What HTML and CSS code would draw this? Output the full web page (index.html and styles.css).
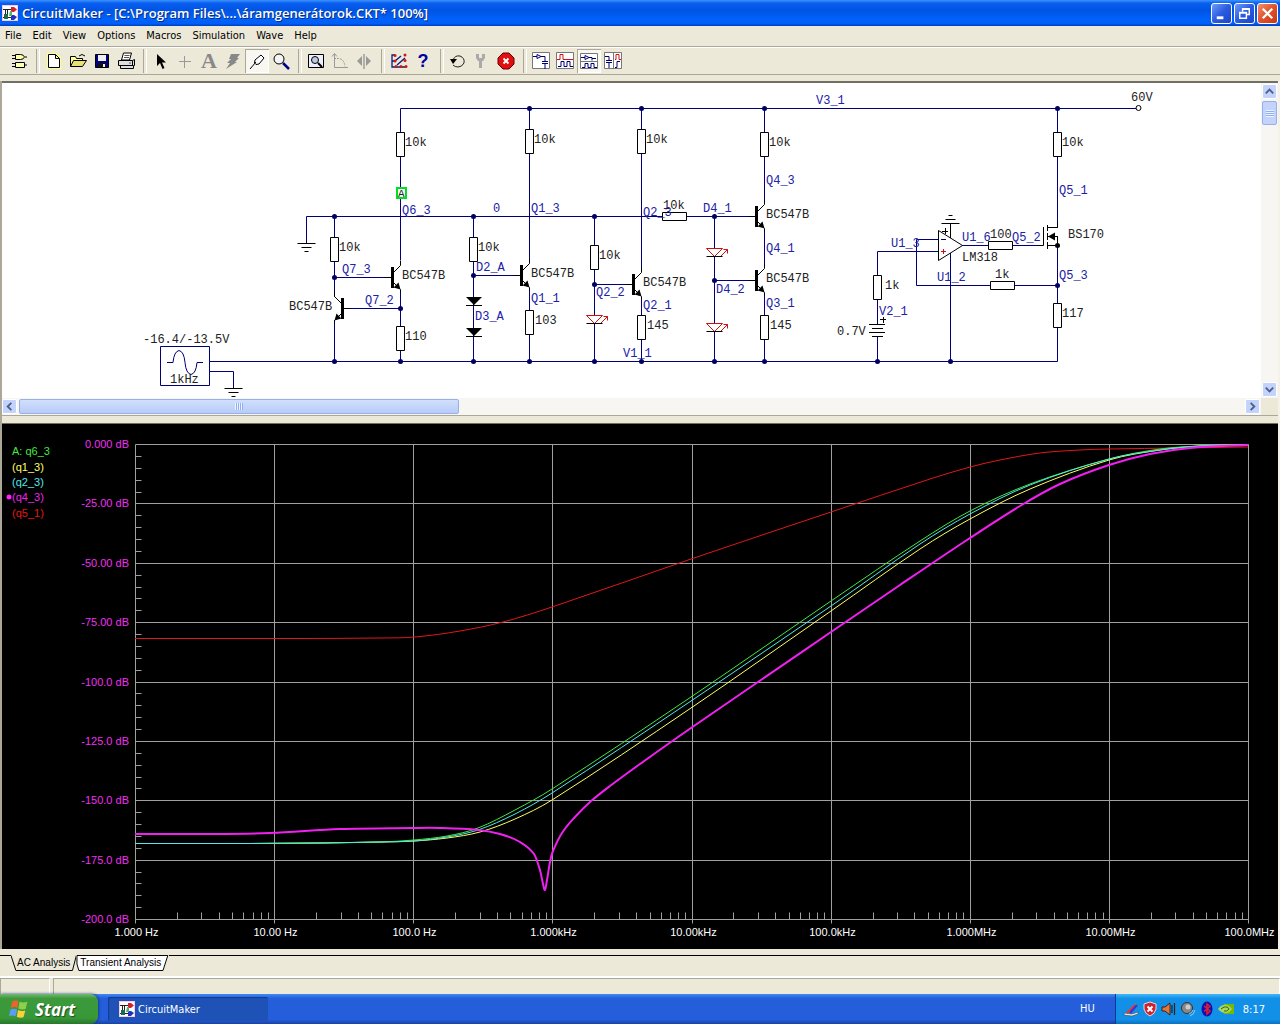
FILE: index.html
```
<!DOCTYPE html>
<html lang="hu">
<head>
	<meta charset="UTF-8">
	<title>CircuitMaker</title>
	<link rel="stylesheet" href="styles.css">
</head>
<body>

<!-- shared symbols -->
<svg class="defs" aria-hidden="true">
	<symbol id="app" viewBox="0 0 16 16">
		<rect width="16" height="16" fill="#fbc8ea"/>
		<rect x="1" y="1" width="14" height="14" fill="#fff"/>
		<path d="M1 4.500h9M5.500 4v9M3.500 4v9M1 12.500h9" stroke="#222" fill="none"/>
		<path d="M9 2h3l3 2.500-3 2.500H9z" fill="#d8202c"/>
		<path d="M9 10h3l3 2-3 3H9z" fill="#2030c0"/>
		<path d="M2 9h4v5H2z" fill="#176b50"/>
		<path d="M8 6h2v5H7z" fill="#58b070"/>
	</symbol>
	<symbol id="res" viewBox="-5 -13 10 26" overflow="visible"><path class="part" d="M-4-12h8v24h-8z"/></symbol>
	<symbol id="resh" viewBox="-13 -5 26 10" overflow="visible"><path class="part" d="M-12-4h24v8h-24z"/></symbol>
</svg>

<header class="title_bar">
	<svg class="ico16"><use href="#app"/></svg>
	<h1>CircuitMaker - [C:\Program Files\...\áramgenerátorok.CKT* 100%]</h1>
	<button class="win_btn" aria-label="Minimize"><svg viewBox="0 0 20 20"><path d="M5 13h7v3H5z" fill="#fff"/></svg></button>
	<button class="win_btn" aria-label="Restore"><svg viewBox="0 0 20 20"><path d="M8 8V5h7v6h-3M5 9h7v6H5zM5 9.500h7M8 5.500h7" fill="none" stroke="#fff" stroke-width="1.500"/></svg></button>
	<button class="win_btn win_close" aria-label="Close"><svg viewBox="0 0 20 20"><path d="M5 5l10 10M15 5L5 15" stroke="#fff" stroke-width="2.400"/></svg></button>
</header>

<nav class="menu">
	<button>File</button>
	<button>Edit</button>
	<button>View</button>
	<button>Options</button>
	<button>Macros</button>
	<button>Simulation</button>
	<button>Wave</button>
	<button>Help</button>
</nav>

<div class="toolbar">
	<div class="grp">
		<button aria-label="Parts"><svg viewBox="0 0 20 20"><path d="M6.500 3.500h5q3 0 4 2.500-1 2.500-4 2.500h-5zM6.500 11.500h9v5h-9zM3 4.500h3M3 7.500h3M16 6h2M3 12.500h3M3 15.500h3M16 14h2" fill="#ffffb0" stroke="#000"/></svg></button>
	</div>
	<div class="grp">
		<button aria-label="New"><svg viewBox="0 0 20 20"><path d="M4.500 3.500h7l4 4v9h-11zM11.500 3.500v4h4" fill="#fff" stroke="#ffff90" stroke-width="3"/><path d="M4.500 3.500h7l4 4v9h-11zM11.500 3.500v4h4" fill="#fff" stroke="#000"/></svg></button>
		<button aria-label="Open"><svg viewBox="0 0 20 20"><path d="M2.500 15.500v-10h5l1 2h6v3" fill="#ffffa0" stroke="#000"/><path d="M2.500 15.500l3-6h13l-4 6z" fill="#e8e070" stroke="#000"/><path d="M11 5q3-3 6 0" fill="none" stroke="#000"/></svg></button>
		<button aria-label="Save"><svg viewBox="0 0 20 20"><path d="M3.500 3.500h13v13h-13z" fill="#000080" stroke="#000"/><path d="M6 4h8v6H6z" fill="#eee"/><path d="M6 12h8v4H6z" fill="#111"/><path d="M11 13h2v3h-2z" fill="#eee"/></svg></button>
		<button aria-label="Print"><svg viewBox="0 0 20 20"><path d="M5.500 9l2-7h8l-2 7z" fill="#fff" stroke="#000"/><path d="M2.500 9.500h14v5h-14zM4.500 14.500h13v3h-13zM16.500 9.500l2-1v6l-1 1" fill="#ddd" stroke="#000"/><path d="M8.500 4.500h5M8 6.500h5M13 12h2" stroke="#555"/></svg></button>
	</div>
	<div class="grp">
		<button aria-label="Arrow"><svg viewBox="0 0 20 20"><path d="M6 3v12l3-3 2.500 6 2-1-2.500-5.500h4z"/></svg></button>
		<button aria-label="Wire"><svg viewBox="0 0 20 20"><path d="M9.500 5v12M4 10.500h12" stroke="#999"/></svg></button>
		<button class="letter" aria-label="Text">A</button>
		<button aria-label="Delete"><svg viewBox="0 0 20 20"><path d="M8 3h9l-3 4h2l-4 4h2L3 18l4-6H4l4-4H6z" fill="#888"/></svg></button>
		<button class="on" aria-label="Probe"><svg viewBox="0 0 20 20"><path d="M3 18l6-7M8 9l6-5 3 3-5 6-3 .500-1.500-1.500z" fill="#fff" stroke="#000"/></svg></button>
		<button aria-label="Zoom"><svg viewBox="0 0 20 20"><path d="M12 12l6 6" stroke="#000090" stroke-width="2.500"/><circle cx="8" cy="8" r="5" fill="#f4f4f4" stroke="#000"/></svg></button>
	</div>
	<div class="grp">
		<button aria-label="Fit"><svg viewBox="0 0 20 20"><path d="M2.500 3.500h15v13h-15z" fill="#eef" stroke="#000"/><path d="M12 12l4 4" stroke="#000" stroke-width="2"/><circle cx="9" cy="9" r="3.500" fill="#bcd" stroke="#000"/></svg></button>
		<button aria-label="Rotate"><svg viewBox="0 0 20 20"><path d="M4.500 3v13.500H18M2 5.500l2.500-3 2.500 3" fill="none" stroke="#999"/><path d="M4 7.500h4q6 0 7 8" fill="none" stroke="#999" stroke-dasharray="2 1"/></svg></button>
		<button aria-label="Mirror"><svg viewBox="0 0 20 20"><path d="M8 5v10l-5-5zM12 5v10l5-5z" fill="#999"/><path d="M10 3v15" stroke="#777"/></svg></button>
	</div>
	<div class="grp">
		<button aria-label="Digital mode"><svg viewBox="0 0 20 20"><path d="M6 4H3v12h14M3 10h3l6-5M8 14l8-7" fill="none" stroke="#002080" stroke-width="1.300"/><g fill="#d01818"><circle cx="6" cy="4.500" r="1.500"/><circle cx="6" cy="10" r="1.500"/><circle cx="7" cy="15.500" r="1.500"/><circle cx="12" cy="15.500" r="1.500"/><circle cx="16" cy="4" r="1.500"/><circle cx="16" cy="9.500" r="1.500"/><circle cx="17" cy="15.500" r="1.500"/></g></svg></button>
		<button class="help" aria-label="Help">?</button>
	</div>
	<div class="grp">
		<button aria-label="Reset"><svg viewBox="0 0 20 20"><path d="M5 9q2-5 7-4 5 2 4 7-2 4-6 4-3 0-5-2" fill="none" stroke="#222"/><path d="M2 8h7l-4 5z"/></svg></button>
		<button aria-label="Setup"><svg viewBox="0 0 20 20"><path d="M4 3v4l2 3h1v7h3v-7h1l2-3V3h-3v4H7V3z" fill="#aaa"/></svg></button>
		<button aria-label="Stop"><svg viewBox="0 0 20 20"><path d="M7 2h6l5 5v6l-5 5H7l-5-5V7z" fill="#e01010" stroke="#600" stroke-linejoin="round"/><path d="M7.500 7.500l5 5M12.500 7.500l-5 5" stroke="#fff" stroke-width="1.800"/></svg></button>
	</div>
	<div class="grp">
		<button aria-label="Schematic view"><svg viewBox="0 0 20 20"><path class="pane" d="M1.500 1.500h17v16h-17z"/><path class="nv" d="M2 5.500h4v-2l4 2-4 2v-2M10 5.500h4v5M11 10.500h6M11 12.500h6M14 13v5"/></svg></button>
		<button aria-label="Wave view"><svg viewBox="0 0 20 20"><path class="pane" d="M1.500 1.500h17v16h-17z"/><path class="rd" d="M2 8.500h3v-5h3v5h10"/><path class="nv" d="M3 15.500h3v-5h3v5h3v-5h3v5h3"/></svg></button>
		<button class="on" aria-label="Split horizontal"><svg viewBox="0 0 20 20"><path class="pane" d="M1.500 2.500h17v15h-17zM2 10.500h16"/><path class="nv" d="M2 6.500h4v-2l4 2-4 2v-2M10 6.500h3v3M13 7.500h4M3 16.500h3v-4h3v4h3v-4h3v4h3"/></svg></button>
		<button aria-label="Split vertical"><svg viewBox="0 0 20 20"><path class="pane" d="M1.500 1.500h17v16h-17zM10.500 2v15"/><path class="nv" d="M2 5.500h4v4M3 9.500h6M3 11.500h6M6 12v5M12 16.500h2v-6h3"/><path class="rd" d="M12 8.500h1v-5h3v5h2"/></svg></button>
	</div>
</div>

<main>
	<section class="sheet">
		<div class="sheet_view">
			<svg id="schematic" viewBox="2 83 1259 315" preserveAspectRatio="xMinYMin meet" role="img" aria-label="Circuit schematic"></svg>
		</div>
		<div class="vscroll">
			<button aria-label="Scroll up"><svg viewBox="0 0 14 14"><path d="M3 9l4-4 4 4"/></svg></button>
			<div class="thumb"></div>
			<button class="last" aria-label="Scroll down"><svg viewBox="0 0 14 14"><path d="M3 5l4 4 4-4"/></svg></button>
		</div>
		<div class="hscroll">
			<button aria-label="Scroll left"><svg viewBox="0 0 14 14"><path d="M9 3L5 7l4 4"/></svg></button>
			<div class="thumb"></div>
			<button class="last" aria-label="Scroll right"><svg viewBox="0 0 14 14"><path d="M5 3l4 4-4 4"/></svg></button>
		</div>
	</section>

	<section class="plot">
		<svg id="plot" viewBox="2 424 1276 525" preserveAspectRatio="xMidYMid meet" role="img" aria-label="AC analysis"></svg>
	</section>
</main>

<div class="tabs">
	<button class="tab"><svg viewBox="0 0 67 16" preserveAspectRatio="none"><path d="M0 .500L5 15.500H63L67 .500" fill="#ece9d8" stroke="#000"/></svg><span>AC Analysis</span></button>
	<button class="tab tab_on"><svg viewBox="0 0 96 16" preserveAspectRatio="none"><path d="M1 .500H95L90 15.500H3L1 9z" fill="#fff" stroke="#000"/></svg><span>Transient Analysis</span></button>
	<i class="tab_line"></i>
</div>

<div class="status"><span></span><span></span></div>

<footer class="taskbar">
	<button class="start">
		<svg viewBox="0 0 18 18"><path d="M3 2q3-1.500 5.500 0L7.500 8Q5 6.500 1.500 8z" fill="#f0622c"/><path d="M9.500 2.500q3 1.500 7 0L15 9q-3 1-6.500-.500z" fill="#8fd04a"/><path d="M1.300 9.500q3-1.500 6 0L6 15.500q-3-1.500-6 0z" fill="#5d9cf5"/><path d="M8.200 10q3 1.500 6.500.300L13 16.500q-3 1-6-.500z" fill="#fbd03a"/></svg>
		Start
	</button>
	<button class="task"><svg class="ico16"><use href="#app"/></svg>CircuitMaker</button>
	<span class="lang">HU</span>
	<div class="tray">
		<svg viewBox="0 0 16 16"><path d="M1 12l8 1 6-2v2l-6 2-8-1z" fill="#eee" stroke="#333" stroke-width=".5"/><path d="M3 12L13 2l2 2-7 8z" fill="#3a6"/><path d="M4 12l8-8" stroke="#e33" stroke-width="2"/><path d="M7 12l7-8" stroke="#33d" stroke-width="2"/></svg>
		<svg viewBox="0 0 16 16"><path d="M8 1l6 2v5q-1 5-6 7-5-2-6-7V3z" fill="#d3202c" stroke="#ddd"/><path d="M5.500 5.500l5 5M10.500 5.500l-5 5" stroke="#fff" stroke-width="2"/></svg>
		<svg viewBox="0 0 16 16"><path d="M1 6h3l5-4v12l-5-4H1z" fill="#e07840" stroke="#402010"/><path d="M11 4v8M13.500 2v12" stroke="#222" stroke-width="1.200"/></svg>
		<svg viewBox="0 0 16 16"><circle cx="7" cy="7" r="5.500" fill="#888" stroke="#333"/><circle cx="8" cy="6" r="2.500" fill="#ccc"/><path d="M10 15q4-1 5-6M9 13q3-1 4-4" fill="none" stroke="#8cc8f4"/></svg>
		<svg viewBox="0 0 16 16"><ellipse cx="8" cy="8" rx="5.500" ry="7.500" fill="#1010b0"/><path d="M5 5l6 5-3 3V3l3 2.500-6 5" fill="none" stroke="#e02030" stroke-width="1.500"/></svg>
		<svg viewBox="0 0 16 16"><path d="M6 3h10v10H6z" fill="#76b900"/><path d="M0 8q4-5 9-4 3 1 5 4-3 4-6 4-5 0-8-4z" fill="#a8d860"/><path d="M3 8q3-3 6-2 2 1 2 2-2 3-5 2" fill="none" stroke="#386010"/></svg>
		<time>8:17</time>
	</div>
</footer>

<script src="script.js"></script>
</body>
</html>
```
FILE: styles.css
```
*{box-sizing: border-box; margin: 0; padding: 0;}
body{ display: flex; flex-direction: column; height: 100vh; overflow: hidden; background: #ece9d8; font: 11px "DejaVu Sans Condensed", "Open Sans", sans-serif; color: #000; }
button{ border: 0; background: none; font: inherit; color: inherit; }
.defs{ position: absolute; width: 0; height: 0; }
.ico16{ flex: none; width: 16px; height: 16px; }

/*title bar*/
.title_bar{ flex: none; display: flex; align-items: center; gap: 2px; height: 26px; padding: 0 2px; background: linear-gradient(#3d95ff 0, #0a5ff0 12%, #0054e3 40%, #0062fb 75%, #0060f8 90%, #003dc0 100%); }
.title_bar h1{ flex: 1; padding-left: 2px; font: 600 13px "Open Sans", sans-serif; color: #fff; text-shadow: 1px 1px 0 #0a2a80; white-space: nowrap; }
.win_btn{ width: 21px; height: 21px; border: 1px solid #fff; border-radius: 3px; background: linear-gradient(135deg, #6f9cf8, #2a5be0 50%, #1d46c8); }
.win_btn svg{ display: block; width: 19px; height: 19px; }
.win_close{ background: linear-gradient(135deg, #f0906c, #e0522c 50%, #c8360e); }

/*menu*/
.menu{ flex: none; display: flex; align-items: center; gap: 1px; height: 21px; border-bottom: 1px solid #aca899; }
.menu button{ padding: 0 5px; line-height: 18px; }

/*toolbar*/
.toolbar{ flex: none; display: flex; align-items: center; height: 28px; padding-left: 7px; border-top: 1px solid #fff; border-bottom: 1px solid #aca899; }
.grp{ display: flex; }
.grp + .grp{ position: relative; margin-left: 11px; }
.grp + .grp::before{ content: ""; position: absolute; left: -6px; top: 0; width: 2px; height: 24px; border-left: 1px solid #aca899; border-right: 1px solid #fff; }
.grp button{ width: 24px; height: 24px; padding: 2px; border: 0; text-align: center; }
.grp svg{ display: block; width: 20px; height: 20px; }
.grp .on{ background: #f8f7f2; box-shadow: inset 1px 1px 0 #aca899, inset -1px -1px 0 #fff; }
.grp .letter{ padding: 0; font: bold 22px/24px "Liberation Serif", serif; color: #888; }
.grp .help{ padding: 0; font: bold 18px/24px "Liberation Sans", sans-serif; color: #0000a0; }
.pane{ fill: #fff; stroke: #777; }
.nv{ fill: none; stroke: #000070; }
.rd{ fill: none; stroke: #d01010; }

main{ flex: 1; min-height: 0; display: flex; flex-direction: column; margin-top: 6px; border-left: 2px solid #aca899; border-right: 2px solid #f4f2e8; }

/*schematic*/
.sheet{ flex: none; display: grid; grid-template-columns: 1fr 17px; grid-template-rows: auto 17px; border-top: 2px solid #716f64; border-bottom: 1px solid #aca899; }
.sheet_view{ background: #fff; }
.sheet svg{ display: block; }
#schematic{ width: 100%; height: auto; }
.vscroll, .hscroll{ display: flex; gap: 2px; padding: 1px; background: #f7f6f2; }
.vscroll{ flex-direction: column; }
.hscroll{ padding-left: 0; }
.vscroll button, .hscroll button{ flex: none; width: 15px; height: 15px; border: 1px solid #fff; border-radius: 2px; background: #c3d3fb; }
.vscroll svg, .hscroll svg{ width: 13px; height: 13px; fill: none; stroke: #4d6185; stroke-width: 2px; }
.thumb{ display: flex; border: 1px solid #98b0e8; border-radius: 2px; background: linear-gradient(#d0dffc, #b9cbf8); }
.thumb::after{ content: ""; width: 8px; height: 7px; margin: auto; background: repeating-linear-gradient(90deg, #eef4fe 0 1px, #8cb0f8 1px 2px); }
.vscroll .thumb{ height: 24px; background: #c3d3fb; }
.vscroll .thumb::after{ background: repeating-linear-gradient(#eef4fe 0 1px, #8cb0f8 1px 2px); }
.hscroll .thumb{ width: 35%; }
.last{ margin-top: auto; }
.hscroll .last{ margin: 0 0 0 auto; }

.wire{ fill: none; stroke: #000078; }
.part{ fill: #fff; stroke: #000; }
.ink{ fill: none; stroke: #000; }
.solid{ fill: #000; }
.led{ fill: #fff; stroke: #c81010; }
.node{ fill: #000060; }
.probe{ fill: #fff; stroke: #00e020; stroke-width: 2px; }
.val, .net{ font: 12px "Liberation Mono", monospace; fill: #222; white-space: pre; }
.net{ fill: #2020a8; }
.probe_txt{ font-size: 11px; }

/*plot*/
.plot{ flex: 1; min-height: 0; margin-top: 7px; border-top: 1px solid #716f64; background: #000; }
.plot svg{ display: block; width: 100%; height: 100%; }
.grid{ fill: none; stroke: #a0a0a0; }
.x_lbl, .y_lbl, .leg{ font: 11px "Liberation Sans", sans-serif; }
.x_lbl{ fill: #fff; text-anchor: middle; }
.y_lbl{ fill: #f030f0; text-anchor: end; }
.curve{ fill: none; }

/*bottom tabs*/
.tabs{ flex: none; display: flex; height: 21px; margin-top: 6px; }
.tabs::before{ content: ""; width: 11px; border-top: 1px solid #000; }
.tab{ position: relative; height: 16px; padding: 0 6px; font: 10px/14px "Liberation Sans", sans-serif; }
.tab svg{ position: absolute; left: 0; top: 0; width: 100%; height: 100%; }
.tab span{ position: relative; }
.tab_on{ padding: 0 8px 0 4px; }
.tab_line{ flex: 1; border-top: 1px solid #000; }

.status{ flex: none; display: flex; gap: 3px; height: 18px; border-top: 2px solid #fff; }
.status span{ flex: 1; border: 1px solid #aca899; border-bottom: 0; border-right-color: #fff; }
.status span:first-child{ flex: 0 0 50px; }

/*taskbar*/
.taskbar{ flex: none; display: flex; align-items: stretch; height: 30px; background: linear-gradient(#3f8cf3 0, #245edb 14%, #245edb 85%, #1941a5 100%); color: #fff; }
.start{ display: flex; align-items: center; gap: 6px; width: 98px; padding: 0 9px; border-radius: 0 8px 8px 0; background: linear-gradient(#72b870 0, #3c9a3c 15%, #389838 80%, #27762b 100%); font: italic bold 17px "Open Sans", sans-serif; color: #fff; text-shadow: 1px 1px 1px #205020; box-shadow: 1px 0 3px #1a3a90; }
.start svg{ width: 20px; height: 20px; }
.task{ display: flex; align-items: center; gap: 3px; width: 160px; margin: 3px 0 3px 10px; padding-left: 11px; border-radius: 2px; background: #1e52b7; box-shadow: inset 1px 1px 1px #123a90; color: #fff; }
.lang{ margin-left: auto; padding: 0 20px; line-height: 30px; }
.tray{ display: flex; align-items: center; gap: 3px; padding: 0 15px 0 7px; border-left: 1px solid #0a3a90; background: linear-gradient(#40b8f8 0, #1290e8 15%, #1290e8 85%, #0d70c0 100%); }
.tray svg{ width: 16px; height: 16px; }
.tray time{ padding-left: 6px; }
```
FILE: script.js
```
(function(){
	const NS = 'http://www.w3.org/2000/svg';

	function add(box, tag, attrs, txt){
		const el = document.createElementNS(NS, tag);
		for(let k in attrs){
			el.setAttribute(k, attrs[k]);
		}
		if(txt !== undefined){
			el.textContent = txt;
		}
		box.appendChild(el);
		return el;
	}

	/*
		schematic
	*/
	const sch = document.getElementById('schematic');

	const wires = [
		'M400.5 260V108.5H1136', 'M306.5 243V216.5H755', 'M210 361.5H1057.5V108.5', 'M210 371.5H233.5V388',
		'M334.5 216.5V297M334.5 320V361.5', 'M334.5 277.5H391', 'M344 308.5H400.5M400.5 290V361.5',
		'M473.5 216.5V361.5', 'M473.5 275.5H520', 'M529.5 108.5V260M529.5 288V361.5',
		'M594.5 216.5V361.5', 'M594.5 284.5H632', 'M641.5 108.5V269M641.5 297V361.5',
		'M714.5 216.5V361.5', 'M714.5 280.5H755', 'M764.5 108.5V201M764.5 229V265M764.5 293V361.5',
		'M938 251.5H877.5V324M877.5 337V361.5', 'M938 239.5H916.5V285.5H1057.5', 'M950.5 253V361.5', 'M962 245.5H1043'
	];
	wires.forEach(d => add(sch, 'path', {class:'wire', d:d}));

	//vertical and horizontal resistors (center)
	const res = [
		[400.5,144.5],[334.5,249.5],[400.5,338.5],[473.5,249.5],[529.5,141.5],[529.5,322.5],[594.5,257.5],
		[641.5,141.5],[641.5,327.5],[764.5,144.5],[764.5,327.5],[1057.5,144.5],[1057.5,315.5],[877.5,287.5]
	];
	res.forEach(r => add(sch, 'use', {href:'#res', x:r[0]-5, y:r[1]-13, width:10, height:26}));
	[[674.5,216.5],[1000.5,245.5],[1002.5,285.5]].forEach(r => add(sch, 'use', {href:'#resh', x:r[0]-13, y:r[1]-5, width:26, height:10}));

	//npn transistors, last value -1 = mirrored
	[[400.5,277.5,1],[334.5,308.5,-1],[529.5,275.5,1],[641.5,284.5,1],[764.5,216.5,1],[764.5,280.5,1]].forEach(q => {
		const g = add(sch, 'g', {transform:'translate(' + q[0] + ' ' + q[1] + ') scale(' + q[2] + ' 1)'});
		add(g, 'path', {class:'ink', d:'M-16 0H-9M-7-5L0-12V-17M-7 5L0 12V15'});
		add(g, 'path', {class:'solid', d:'M-9.500-10.500h3v21h-3zM0 12L-7 10L-2 5z'});
	});

	//diodes
	[297,328].forEach(y => {
		add(sch, 'path', {class:'solid', d:'M466 ' + y + 'h16l-8 8z'});
		add(sch, 'path', {class:'ink', d:'M466 ' + (y + 8.5) + 'h16'});
	});
	[[594.5,315.5],[714.5,248.5],[714.5,323.5]].forEach(p => {
		add(sch, 'path', {class:'led', d:'M' + (p[0]-8) + ' ' + p[1] + 'h16l-8 8zm14 8l7-7m-4 0h4v4'});
		add(sch, 'path', {class:'ink', d:'M' + (p[0]-8) + ' ' + (p[1]+8) + 'h16'});
	});

	//grounds
	[[306.5,243.5,1],[233.5,388.5,1],[950.5,223.5,-1]].forEach(g => {
		add(sch, 'path', {class:'ink', d:'M-9 0H9M-5 4H5M-2 8H2', transform:'translate(' + g[0] + ' ' + g[1] + ') scale(1 ' + g[2] + ')'});
	});

	//signal source
	add(sch, 'path', {class:'wire', d:'M160.500 346.500h49v39h-49zM167 362.500h6q1-11 6-12 5 1 6 12 1 11 6 12 5-1 6-12h6'});
	//op amp
	add(sch, 'path', {class:'ink', d:'M938.500 230.500v30l24-15zM950.500 223v15M942 231.500h6M945.500 228v6'});
	add(sch, 'path', {class:'wire', d:'M941 239.500h5'});
	add(sch, 'path', {class:'led', d:'M941 251.500h5M943.500 249v5'});
	//battery
	add(sch, 'rect', {fill:'#fff', x:869, y:325, width:17, height:12});
	add(sch, 'path', {class:'ink', d:'M869 324.500h16M872 328.500h11M869 332.500h16M872 336.500h11M880 319.500h6M883.500 317v6'});
	//mosfet
	add(sch, 'rect', {fill:'#fff', x:1056, y:228, width:3, height:8});
	add(sch, 'path', {class:'ink', d:'M1043.500 227v18.500h-6M1047.500 225v6M1047.500 233v7M1047.500 242v7M1048 227.500h9.500v-6M1048 236.500h9.500v9h-10'});
	add(sch, 'path', {class:'solid', d:'M1048 236.500l7-4v8z'});
	add(sch, 'circle', {class:'solid', cx:1057.5, cy:245.5, r:2.5});

	//junctions
	const nodes = [
		[529,108],[641,108],[764,108],[1057,108],[334,216],[473,216],[594,216],[714,216],[334,277],[400,308],
		[473,275],[594,284],[714,280],[1057,285],[334,361],[400,361],[473,361],[529,361],[594,361],[641,361],
		[714,361],[764,361],[877,361],[950,361]
	];
	nodes.forEach(n => add(sch, 'circle', {class:'node', cx:n[0] + .5, cy:n[1] + .5, r:2.5}));
	add(sch, 'circle', {class:'part', cx:1138.5, cy:108, r:2.5});

	//component values
	const vals = [
		[405,146,'10k'],[339,251,'10k'],[402,279,'BC547B'],[289,310,'BC547B'],[405,340,'110'],[143,343,'-16.4/-13.5V'],
		[170,383,'1kHz'],[534,143,'10k'],[646,143,'10k'],[769,146,'10k'],[478,251,'10k'],[531,277,'BC547B'],[535,324,'103'],
		[599,259,'10k'],[643,286,'BC547B'],[647,329,'145'],[663,209,'10k'],[766,218,'BC547B'],[766,282,'BC547B'],
		[770,329,'145'],[1131,101,'60V'],[1062,146,'10k'],[1068,238,'BS170'],[990,238,'100'],[962,261,'LM318'],
		[995,278,'1k'],[885,289,'1k'],[837,335,'0.7V'],[1062,317,'117']
	];
	vals.forEach(t => add(sch, 'text', {class:'val', x:t[0], y:t[1]}, t[2]));

	//net names
	const nets = [
		[402,214,'Q6_3'],[342,273,'Q7_3'],[365,304,'Q7_2'],[493,212,'0'],[531,212,'Q1_3'],[816,104,'V3_1'],[476,271,'D2_A'],
		[531,302,'Q1_1'],[475,320,'D3_A'],[596,296,'Q2_2'],[643,216,'Q2_3'],[643,309,'Q2_1'],[623,357,'V1_1'],
		[703,212,'D4_1'],[766,184,'Q4_3'],[766,252,'Q4_1'],[716,293,'D4_2'],[766,307,'Q3_1'],[1059,194,'Q5_1'],
		[1012,241,'Q5_2'],[962,241,'U1_6'],[891,247,'U1_3'],[937,281,'U1_2'],[1059,279,'Q5_3'],[879,315,'V2_1']
	];
	nets.forEach(t => add(sch, 'text', {class:'net', x:t[0], y:t[1]}, t[2]));

	add(sch, 'rect', {class:'probe', x:397, y:188, width:9, height:10});
	add(sch, 'text', {class:'val probe_txt', x:398, y:197}, 'A');

	/*
		plot
	*/
	const plot = document.getElementById('plot');
	const left = 135.5, right = 1248.5, top = 444.5, bottom = 919.5;
	const freqs = ['1.000 Hz','10.00 Hz','100.0 Hz','1.000kHz','10.00kHz','100.0kHz','1.000MHz','10.00MHz','100.0MHz'];
	const levels = ['0.000 dB','-25.00 dB','-50.00 dB','-75.00 dB','-100.0 dB','-125.0 dB','-150.0 dB','-175.0 dB','-200.0 dB'];
	const dx = (right - left) / 8;
	const dy = (bottom - top) / 8;
	const snap = v => Math.floor(v) + .5;
	let d = '';

	freqs.forEach((f, i) => {
		const x = snap(left + i * dx);
		d += 'M' + x + ' ' + top + 'V' + (bottom + 4);
		if(i < 8){
			for(let k=2;k<10;k++){
				d += 'M' + snap(left + (i + Math.log10(k)) * dx) + ' ' + bottom + 'v-7';
			}
		}
		add(plot, 'text', {class:'x_lbl', x:x + 1, y:936}, f);
	});
	levels.forEach((l, i) => {
		const y = snap(top + i * dy);
		d += 'M' + left + ' ' + y + 'H' + right;
		if(i < 8){
			for(let k=1;k<5;k++){
				d += 'M' + left + ' ' + snap(top + (i + k / 5) * dy) + 'h6';
			}
		}
		add(plot, 'text', {class:'y_lbl', x:129, y:Math.floor(y) + 4}, l);
	});
	add(plot, 'path', {class:'grid', d:d});

	//smooth line through the points
	function smooth(p){
		let s = 'M' + p[0];
		for(let i=0;i<p.length-1;i++){
			const a = p[i-1] || p[i], b = p[i], c = p[i+1], e = p[i+2] || c;
			const h = (c[0] - b[0]) / 3;
			const m1 = c === a ? 0 : (c[1] - a[1]) / (c[0] - a[0]);
			const m2 = (e[1] - b[1]) / (e[0] - b[0]);
			s += 'C' + [b[0] + h, b[1] + m1 * h, c[0] - h, c[1] - m2 * h, c[0], c[1]];
		}
		return s;
	}

	const curves = [
		{name:'(q5_1)', y:517, color:'#e01818', w:1, pts:[[135,638.5],[300,638.5],[380,638],[415,637],[460,631],[503,622],[552,607],[691,559],[831,512],[930,479],[970,467],[1000,460],[1040,453],[1080,450],[1109,449],[1180,448],[1248,447]]},
		{name:'(q1_3)', y:471, color:'#ffff60', w:1, pts:[[135,843.5],[250,843.5],[320,843],[380,842],[414,841],[447,838],[480,832],[515,819],[552,800],[691,708],[831,611],[920,549],[970,519],[1030,489],[1109,460],[1160,450],[1200,446],[1248,445]]},
		{name:'A: q6_3', y:455, color:'#40e840', w:1, pts:[[135,843.5],[250,843.5],[320,843],[380,842],[414,840],[447,836],[478,828],[515,810],[552,789],[691,697],[831,601],[920,541],[970,511],[1030,484],[1109,459],[1160,449],[1200,446],[1248,445]]},
		{name:'(q2_3)', y:486, color:'#50e8e8', w:1, pts:[[135,843.5],[250,843.5],[320,843],[380,842],[414,841],[447,837],[478,830],[515,814],[552,793],[691,701],[831,606],[920,544],[970,514],[1030,485],[1109,459],[1160,450],[1200,446],[1248,445]]},
		{name:'(q4_3)', y:501, color:'#f020f0', w:2, pts:[[135,834],[200,834],[270,833],[340,829],[414,828],[440,828],[478,830],[500,834],[520,842],[534,854],[540,870],[543,884],[545,890],[547,880],[550,862],[553,851],[562,833],[575,817],[590,802],[610,786],[640,764],[691,728],[831,632],[900,585],[970,538],[1020,506],[1060,484],[1109,465],[1150,454],[1190,448],[1248,445]]}
	];
	curves.forEach(c => {
		add(plot, 'path', {class:'curve', d:smooth(c.pts), stroke:c.color, 'stroke-width':c.w});
		add(plot, 'text', {class:'leg', x:12, y:c.y, fill:c.color}, c.name);
	});
	add(plot, 'circle', {cx:9, cy:497, r:2.5, fill:'#ff20ff'});
})();
```
